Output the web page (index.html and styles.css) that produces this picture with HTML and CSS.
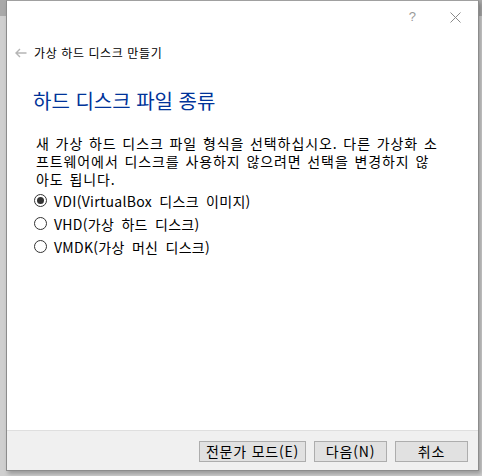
FILE: index.html
```html
<!DOCTYPE html>
<html lang="ko">
<head>
    <meta charset="UTF-8">
    <title>가상 하드 디스크 만들기</title>
    <link rel="stylesheet" href="styles.css">
</head>
<body>
    <div class="window">
        <div class="titlebar">
            <span class="help">?</span>
            <svg class="close" width="11" height="11" viewBox="0 0 11 11">
                <path d="M0.5 0.5 L10.5 10.5 M10.5 0.5 L0.5 10.5" stroke="#8a8a8a" stroke-width="1" fill="none"/>
            </svg>
        </div>

        <div class="nav">
            <svg class="back" width="12" height="10" viewBox="0 0 12 10">
                <path d="M5 1 L1 5 L5 9 M1 5 L11.5 5" stroke="#b5b5b5" stroke-width="1.4" fill="none"/>
            </svg>
            <span>가상 하드 디스크 만들기</span>
        </div>

        <div class="content">
            <h1 class="heading">하드 디스크 파일 종류</h1>
            <p class="desc">새 가상 하드 디스크 파일 형식을 선택하십시오. 다른 가상화 소프트웨어에서 디스크를 사용하지 않으려면 선택을 변경하지 않아도 됩니다.</p>

            <div class="options">
                <label class="option"><span class="radio checked"></span>VDI(VirtualBox 디스크 이미지)</label>
                <label class="option"><span class="radio"></span>VHD(가상 하드 디스크)</label>
                <label class="option"><span class="radio"></span>VMDK(가상 머신 디스크)</label>
            </div>
        </div>

        <div class="footer">
            <button type="button" class="btn btn-wide">전문가 모드(E)</button>
            <button type="button" class="btn">다음(N)</button>
            <button type="button" class="btn">취소</button>
        </div>
    </div>
</body>
</html>
```

FILE: styles.css
```css
body {
    margin: 0;
    padding: 0;
    width: 482px;
    height: 476px;
    overflow: hidden;
    background: linear-gradient(to bottom, #a9a9a9 0, #a9a9a9 16px, #cfcfcf 16px, #cfcfcf 100%);
    font-family: "Noto Sans CJK KR", "Noto Sans", sans-serif;
    color: #000;
}

.window {
    margin-left: 6px;
    width: 471px;
    height: 469px;
    border: 1px solid #8c8c8c;
    border-top-color: #a0a0a0;
    background: #fff;
    display: flex;
    flex-direction: column;
    box-shadow: 2px 3px 4px rgba(0, 0, 0, 0.25);
}

.titlebar {
    height: 31px;
    display: flex;
    justify-content: flex-end;
    align-items: center;
    gap: 34px;
    padding-right: 17px;
}

.help {
    font-family: "Liberation Sans", sans-serif;
    font-size: 13px;
    color: #9a9a9a;
}

.close {
    margin-top: 1px;
}

.nav {
    height: 20px;
    margin-top: 10px;
    display: flex;
    align-items: center;
    gap: 7px;
    padding-left: 8px;
    font-size: 12px;
    letter-spacing: 0.6px;
}

.back {
    margin-top: 1px;
}

.content {
    flex: 1;
    padding: 0 0 0 26px;
}

.heading {
    margin: 26px 0 0 0;
    font-size: 20px;
    font-weight: normal;
    color: #003399;
    line-height: 26px;
}

.desc {
    margin: 20px 0 0 3px;
    width: 404px;
    font-size: 14px;
    line-height: 18px;
    letter-spacing: 0.9px;
    word-spacing: 1px;
    word-break: break-all;
}

.options {
    margin-top: 1px;
    display: flex;
    flex-direction: column;
}

.option {
    height: 23px;
    display: flex;
    align-items: center;
    gap: 7px;
    font-size: 14px;
    letter-spacing: 0.3px;
    word-spacing: 3px;
}

.radio {
    width: 11px;
    height: 11px;
    border: 1px solid #333;
    border-radius: 50%;
    position: relative;
    margin-left: 1px;
}

.radio.checked::after {
    content: "";
    position: absolute;
    left: 2px;
    top: 2px;
    width: 7px;
    height: 7px;
    border-radius: 50%;
    background: #333;
}

.footer {
    height: 40px;
    border-top: 1px solid #dfdfdf;
    background: #f0f0f0;
    display: flex;
    justify-content: flex-end;
    align-items: flex-start;
    gap: 8px;
    padding: 10px 10px 0 0;
    box-sizing: border-box;
}

.btn {
    width: 73px;
    height: 21px;
    padding: 0;
    background: #e1e1e1;
    border: 1px solid #adadad;
    font-family: "Noto Sans CJK KR", sans-serif;
    font-size: 14px;
    line-height: 19px;
    letter-spacing: 0.8px;
    color: #000;
}

.btn-wide {
    width: 107px;
}
```
